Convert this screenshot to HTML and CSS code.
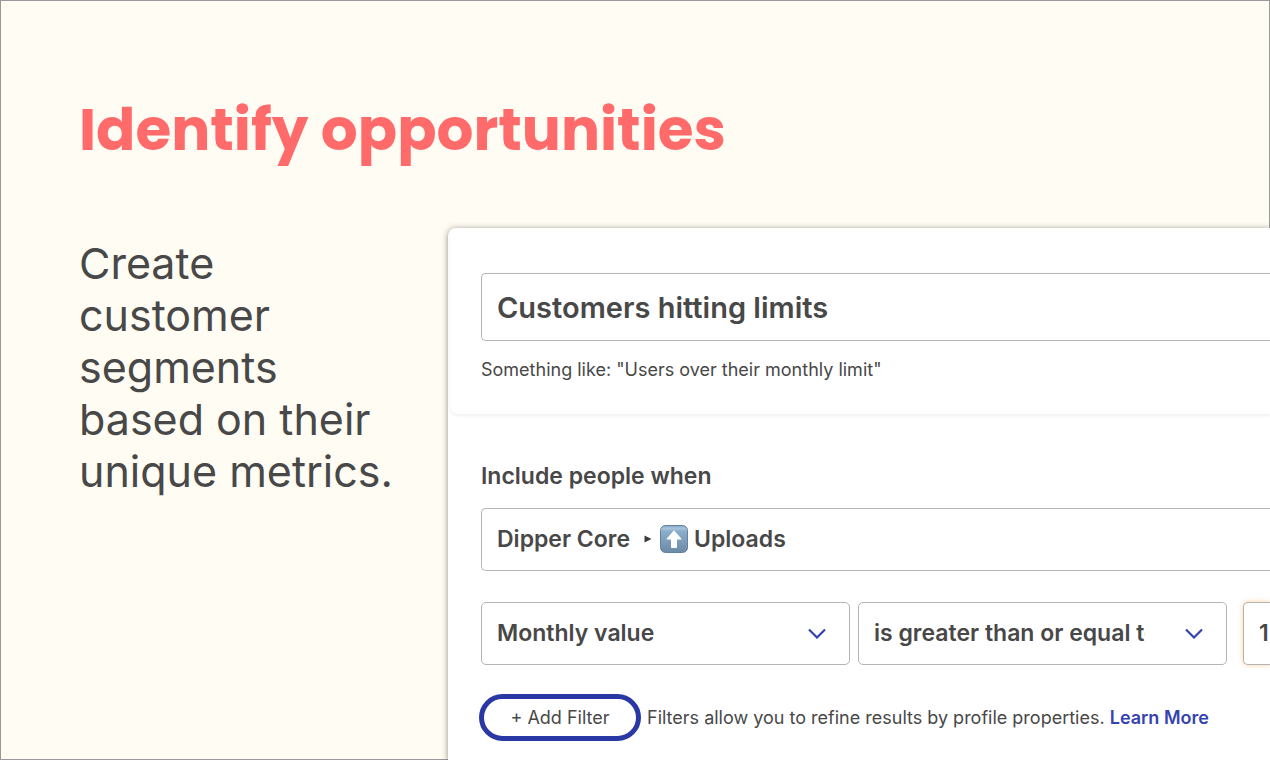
FILE: index.html
```html
<!DOCTYPE html>
<html lang="en">
<head>
<meta charset="utf-8">
<title>Identify opportunities</title>
<link rel="stylesheet" href="styles.css">
</head>
<body>
<main class="slide">
  <h1 class="slide-title">Identify opportunities</h1>
  <div class="slide-body">
    <p class="slide-text">Create customer segments based on their unique metrics.</p>
    <form class="card">
      <section class="card-section card-name">
        <input class="field field-large" type="text" id="segment-name" aria-label="Segment name" aria-describedby="name-hint" value="Customers hitting limits">
        <p class="hint" id="name-hint">Something like: "Users over their monthly limit"</p>
      </section>
      <section class="card-section card-rules">
        <label class="label" for="metric">Include people when</label>
        <button class="field metric" type="button" id="metric">
          <span>Dipper Core</span>
          <svg class="metric-arrow" viewBox="0 0 8 8" aria-hidden="true"><path d="M0.500 0.500l7 3.500-7 3.500z" fill="#3c3c3c"/></svg>
          <svg class="metric-icon" viewBox="0 0 28 28" aria-hidden="true">
            <defs>
              <linearGradient id="tile" x1="0" y1="0" x2="0" y2="1">
                <stop offset="0" stop-color="#7fa3c4"/>
                <stop offset="0.1" stop-color="#a9c5dd"/>
                <stop offset="0.22" stop-color="#8badcb"/>
                <stop offset="1" stop-color="#6b8aa8"/>
              </linearGradient>
            </defs>
            <rect x="0.5" y="0.5" width="27" height="27" rx="5" fill="url(#tile)" stroke="#64829e"/>
            <path d="M14 5.200l7.200 8.200c.5.6.2 1-.5 1H17v7.600c0 .6-.3.900-.9.900h-4.200c-.6 0-.9-.3-.9-.9v-7.600H7.300c-.7 0-1-.4-.5-1z" fill="#fff"/>
          </svg>
          <span>Uploads</span>
        </button>
        <div class="condition">
          <div class="select">
            <select class="field select-input" aria-label="Value type">
              <option>Monthly value</option>
            </select>
            <svg class="chevron" viewBox="0 0 18 11" aria-hidden="true"><path d="M1 1.500L9 9.500l8-8" fill="none" stroke="#3543b0" stroke-width="2.200"/></svg>
          </div>
          <div class="select">
            <select class="field select-input" aria-label="Comparison">
              <option>is greater than or equal to</option>
            </select>
            <svg class="chevron" viewBox="0 0 18 11" aria-hidden="true"><path d="M1 1.500L9 9.500l8-8" fill="none" stroke="#3543b0" stroke-width="2.200"/></svg>
          </div>
          <input class="field amount" type="text" aria-label="Amount" value="1">
        </div>
        <div class="filters">
          <button class="add-filter" type="button">+ Add Filter</button>
          <p class="filters-text">Filters allow you to refine results by profile properties. <a class="link" href="#">Learn More</a></p>
        </div>
      </section>
    </form>
  </div>
</main>
</body>
</html>
```
FILE: styles.css
```css
* {
  box-sizing: border-box;
}

body {
  margin: 0;
  background: #fffcf4;
  color: #484848;
  font-family: Inter, "Liberation Sans", sans-serif;
}

h1,
p {
  margin: 0;
}

.slide {
  display: flex;
  flex-direction: column;
  height: 100vh;
  padding: 94px 0 0 78px;
  border: 1px solid #999;
}

.slide-title {
  color: #ff6b6b;
  font-family: Poppins, Inter, sans-serif;
  font-size: 58px;
  font-weight: 700;
  line-height: 70px;
}

.slide-body {
  display: grid;
  flex: 1;
  grid-template-columns: 321px minmax(0, 1fr);
  column-gap: 48px;
  min-height: 0;
  padding-top: 63px;
}

.slide-text {
  padding-top: 9px;
  font-size: 43px;
  line-height: 52px;
}

.card {
  z-index: 1;
  margin: 0 -1px -1px 0;
  border-radius: 8px 0 0 0;
  background: #fff;
  box-shadow: 0 1px 6px rgba(40, 30, 10, 0.5);
}

.card-section {
  padding-left: 33px;
}

.card-name {
  margin-left: 2px;
  padding: 45px 0 32px 31px;
  border-radius: 0 0 0 8px;
  box-shadow: 0 2px 3px rgba(0, 0, 0, 0.06);
}

.card-rules {
  padding-top: 48px;
}

.field {
  display: block;
  width: 100%;
  height: 63px;
  padding: 0 15px 2px;
  border: 1px solid #b4b4b4;
  border-radius: 5px;
  background: #fff;
  color: #484848;
  font-family: inherit;
  font-size: 23px;
  font-weight: 600;
}

.field-large {
  height: 68px;
  padding-bottom: 0;
  border-right: 0;
  border-radius: 5px 0 0 5px;
  font-size: 29px;
}

.hint {
  padding-top: 17px;
  font-size: 18px;
  line-height: 24px;
}

.label {
  display: block;
  padding-bottom: 18px;
  font-size: 23px;
  font-weight: 600;
  line-height: 28px;
}

.metric {
  display: flex;
  align-items: center;
  border-right: 0;
  border-radius: 5px 0 0 5px;
}

.metric-arrow {
  width: 8px;
  height: 8px;
  margin: 0 8px 0 14px;
}

.metric-icon {
  width: 28px;
  height: 28px;
  margin-right: 6px;
}

.condition {
  display: grid;
  grid-template-columns: 369px 369px minmax(0, 1fr);
  column-gap: 8px;
  padding-top: 31px;
}

.select {
  display: grid;
  align-items: center;
}

.select-input,
.chevron {
  grid-area: 1 / 1;
}

.select-input {
  padding-right: 81px;
  appearance: none;
}

.chevron {
  z-index: 1;
  justify-self: end;
  width: 18px;
  height: 11px;
  margin-right: 24px;
  pointer-events: none;
}

.amount {
  width: auto;
  min-width: 0;
  margin-left: 8px;
  padding-right: 0;
  border-right: 0;
  border-radius: 5px 0 0 5px;
  box-shadow: 0 0 5px rgba(255, 160, 60, 0.5);
}

.filters {
  display: flex;
  align-items: center;
  gap: 6px;
  margin-left: -2px;
  padding-top: 29px;
}

.add-filter {
  width: 162px;
  height: 47px;
  border: 5px solid #2a38a5;
  border-radius: 24px;
  background: #fff;
  color: #484848;
  font-family: inherit;
  font-size: 18px;
}

.filters-text {
  font-size: 18px;
  line-height: 24px;
  white-space: nowrap;
}

.link {
  color: #3543b0;
  font-weight: 600;
  text-decoration: none;
}
```
